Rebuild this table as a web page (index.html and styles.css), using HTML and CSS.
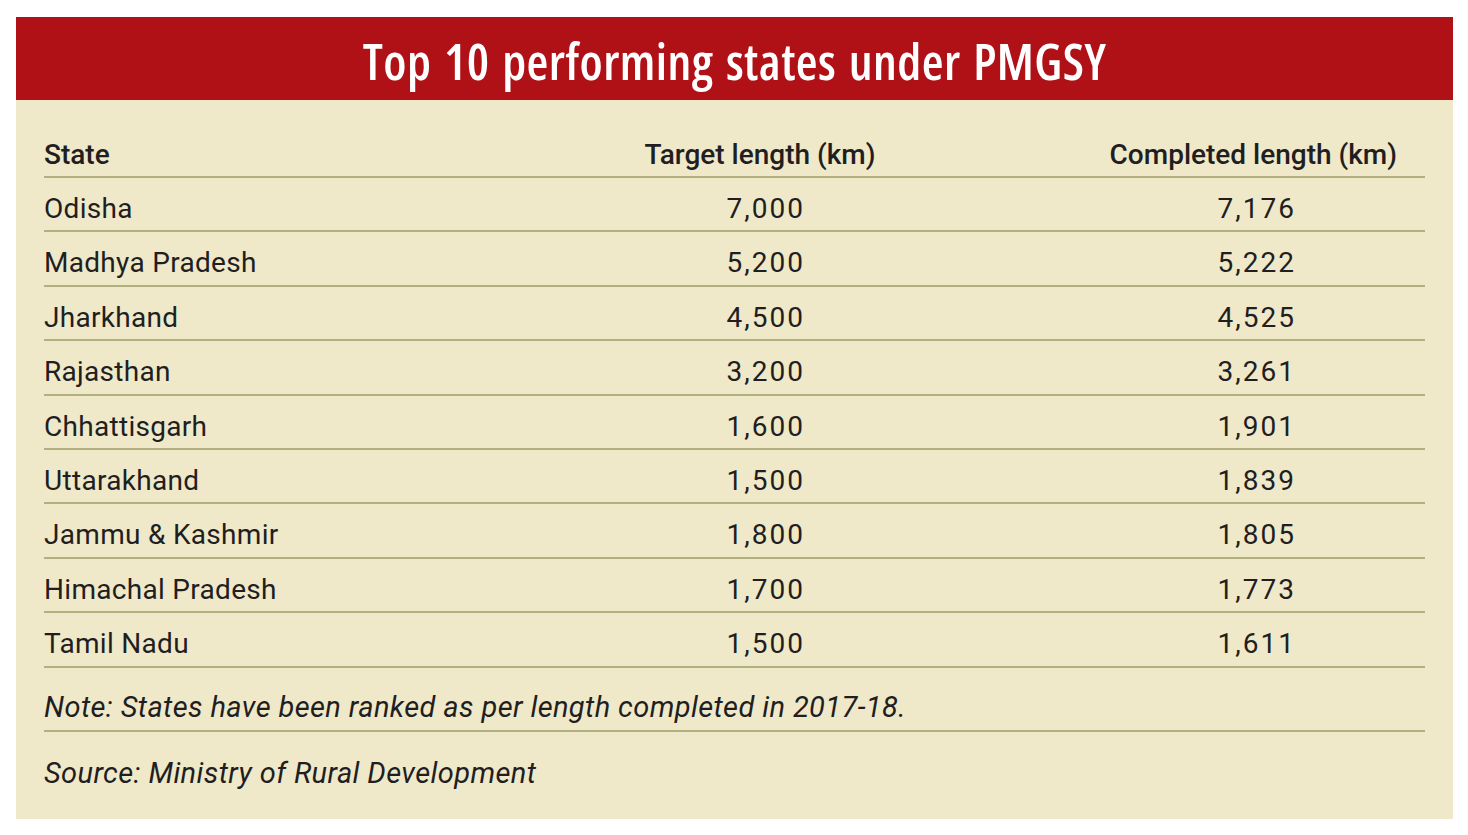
FILE: index.html
```html
<!DOCTYPE html>
<html lang="en">
<head>
<meta charset="utf-8">
<title>Top 10 performing states under PMGSY</title>
<link rel="stylesheet" href="styles.css">
</head>
<body>
<div class="panel">
  <div class="banner"><h1 class="title">Top 10 performing states under PMGSY</h1></div>
  <div class="body">
    <div class="row head">
      <div class="c1">State</div>
      <div class="c2">Target length (km)</div>
      <div class="c3">Completed length (km)</div>
    </div>
    <div class="row"><div class="c1">Odisha</div><div class="c2 num">7,000</div><div class="c3 num">7,176</div></div>
    <div class="row"><div class="c1">Madhya Pradesh</div><div class="c2 num">5,200</div><div class="c3 num">5,222</div></div>
    <div class="row"><div class="c1">Jharkhand</div><div class="c2 num">4,500</div><div class="c3 num">4,525</div></div>
    <div class="row"><div class="c1">Rajasthan</div><div class="c2 num">3,200</div><div class="c3 num">3,261</div></div>
    <div class="row"><div class="c1">Chhattisgarh</div><div class="c2 num">1,600</div><div class="c3 num">1,901</div></div>
    <div class="row"><div class="c1">Uttarakhand</div><div class="c2 num">1,500</div><div class="c3 num">1,839</div></div>
    <div class="row"><div class="c1">Jammu &amp; Kashmir</div><div class="c2 num">1,800</div><div class="c3 num">1,805</div></div>
    <div class="row"><div class="c1">Himachal Pradesh</div><div class="c2 num">1,700</div><div class="c3 num">1,773</div></div>
    <div class="row"><div class="c1">Tamil Nadu</div><div class="c2 num">1,500</div><div class="c3 num">1,611</div></div>
    <p class="note">Note: States have been ranked as per length completed in 2017-18.</p>
    <p class="source">Source: Ministry of Rural Development</p>
  </div>
</div>
</body>
</html>
```

FILE: styles.css
```css
html, body {
  margin: 0;
  padding: 0;
  background: #ffffff;
}

body {
  font-family: Roboto, "Liberation Sans", sans-serif;
  color: #221e1f;
}

.panel {
  margin: 17px 15px 0 16px;
  height: 802px;
  background: #efe9c9;
}

.banner {
  height: 83px;
  background: #b01116;
  display: flex;
  align-items: center;
  justify-content: center;
}

.title {
  margin: 0;
  padding-top: 4px;
  color: #ffffff;
  font-family: "Open Sans", "DejaVu Sans Condensed", sans-serif;
  font-stretch: 75%;
  font-weight: 650;
  font-size: 50px;
  line-height: 60px;
  letter-spacing: 0.45px;
  word-spacing: 3px;
}

.body {
  padding: 0 28px;
}

.row {
  display: grid;
  grid-template-columns: 516px 400px 1fr;
  border-bottom: 2px solid #b3b07f;
  padding-top: 10px;
  font-size: 28px;
  line-height: 42.4px;
  font-weight: 400;
  letter-spacing: 0.3px;
}

.row.head {
  padding-top: 36px;
  padding-bottom: 2px;
  line-height: 38px;
  font-size: 28px;
  font-weight: 500;
  letter-spacing: 0;
}

.head .c2 {
  text-align: center;
}

.head .c3 {
  text-align: right;
  padding-right: 28px;
}

.num {
  letter-spacing: 2px;
}

.c2.num {
  text-align: right;
  padding-right: 155px;
}

.c3.num {
  text-align: right;
  padding-right: 129px;
}

.note, .source {
  margin: 0;
  font-style: italic;
  font-size: 29px;
  line-height: 42px;
  letter-spacing: 0.4px;
}

.note {
  padding: 18px 0 2px;
  border-bottom: 2px solid #b3b07f;
}

.source {
  padding-top: 20px;
}
```
